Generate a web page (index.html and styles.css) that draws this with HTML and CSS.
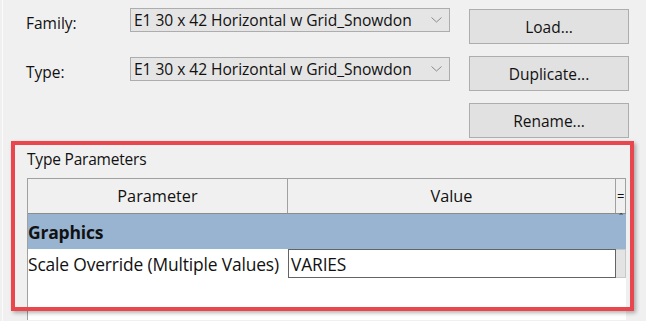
FILE: index.html
```html
<!DOCTYPE html>
<html lang="en">
<head>
    <meta charset="UTF-8">
    <meta name="viewport" content="width=device-width, initial-scale=1.0">
    <title>Type Properties</title>
    <link rel="stylesheet" href="styles.css">
</head>
<body>
    <div id="dialog">
        <div class="top">
            <div class="fields">
                <div class="field">
                    <label>Family:</label>
                    <div class="combo">
                        <span>E1 30 x 42 Horizontal w Grid_Snowdon</span>
                        <svg class="chevron" width="11" height="6" viewBox="0 0 11 6"><path d="M0.5 0.5 L5.5 5 L10.5 0.5" fill="none" stroke="#8a8a8a" stroke-width="1"/></svg>
                    </div>
                </div>
                <div class="field">
                    <label>Type:</label>
                    <div class="combo">
                        <span>E1 30 x 42 Horizontal w Grid_Snowdon</span>
                        <svg class="chevron" width="11" height="6" viewBox="0 0 11 6"><path d="M0.5 0.5 L5.5 5 L10.5 0.5" fill="none" stroke="#8a8a8a" stroke-width="1"/></svg>
                    </div>
                </div>
            </div>
            <div class="buttons">
                <button>Load...</button>
                <button>Duplicate...</button>
                <button>Rename...</button>
            </div>
        </div>

        <div class="params">
            <div class="params-title">Type Parameters</div>
            <div class="grid">
                <div class="row head">
                    <div class="cell c-name">Parameter</div>
                    <div class="cell c-value">Value</div>
                    <div class="cell c-eq">=</div>
                </div>
                <div class="row group">
                    <div class="group-name">Graphics</div>
                    <div class="collapse">&#710;</div>
                </div>
                <div class="row item">
                    <div class="cell c-name">Scale Override (Multiple Values)</div>
                    <div class="cell c-value input">VARIES</div>
                    <div class="cell c-eq side"></div>
                </div>
            </div>
        </div>

        <!-- red highlight drawn over the dialog -->
        <div id="highlight"></div>
    </div>
</body>
</html>
```

FILE: styles.css
```css
body {
    margin: 0;
    background: #f0f0f0;
    font-family: "Open Sans", "Noto Sans", sans-serif;
    color: #111111;
    height: 321px;
    overflow: hidden;
}

#dialog {
    position: relative;
    height: 321px;
    border-left: 1px solid #fbfbfb;
    margin-left: 2px;
}

.top {
    display: flex;
    padding: 8px 0 0 23px;
}

.fields {
    display: flex;
    flex-direction: column;
    gap: 25px;
}

.field {
    display: flex;
    align-items: center;
    height: 24px;
}

.field label {
    width: 104px;
    font-size: 15.5px;
    padding-top: 5px;
}

.combo {
    box-sizing: border-box;
    width: 320px;
    height: 24px;
    background: #e5e5e5;
    border: 1px solid #adadad;
    display: flex;
    align-items: center;
    justify-content: space-between;
    padding: 0 6px 0 3px;
    font-size: 15.6px;
    letter-spacing: -0.05px;
}

.chevron {
    margin-right: 1px;
}

.buttons {
    display: flex;
    flex-direction: column;
    gap: 12px;
    margin: 1px 0 0 19px;
}

button {
    box-sizing: border-box;
    width: 160px;
    height: 35px;
    background: #e1e1e1;
    border: 1px solid #adadad;
    font-family: inherit;
    font-size: 15.5px;
    color: #111111;
    padding: 0;
}

.params {
    padding: 11px 0 0 24px;
}

.params-title {
    font-size: 15.5px;
    height: 21px;
    line-height: 21px;
    letter-spacing: -0.2px;
}

.grid {
    width: 598px;
    margin-top: 8px;
    height: 142px;
    background: #ffffff;
    border-left: 1px solid #a0a0a0;
}

.row {
    display: flex;
}

.cell {
    box-sizing: border-box;
}

.c-name {
    width: 260px;
}

.c-value {
    width: 328px;
}

.c-eq {
    width: 10px;
}

.head {
    height: 36px;
    background: #f0f0f0;
    border-top: 1px solid #a0a0a0;
    border-bottom: 1px solid #8c8c8c;
    box-sizing: border-box;
    font-size: 16.3px;
}

.head .cell {
    display: flex;
    align-items: center;
    justify-content: center;
    border-right: 1px solid #a0a0a0;
}

.head .c-eq {
    font-size: 13px;
    justify-content: flex-start;
    padding-left: 1px;
}

.group {
    height: 35px;
    background: #99b4d1;
    align-items: center;
    justify-content: space-between;
    position: relative;
}

.group-name {
    font-weight: bold;
    font-size: 17.5px;
    padding-left: 0;
    letter-spacing: -0.2px;
}

.collapse {
    position: absolute;
    right: 3px;
    top: -3px;
    font-size: 10px;
    color: #333;
}

.item {
    height: 30px;
    font-size: 17.4px;
    align-items: stretch;
    letter-spacing: -0.15px;
}

.item .c-name {
    display: flex;
    align-items: center;
    padding-left: 0;
    white-space: nowrap;
}

.item .input {
    border: 1px solid #646464;
    background: #ffffff;
    display: flex;
    align-items: center;
    padding-left: 2px;
    height: 29px;
}

.item .side {
    background: #e3e3e3;
    border: 1px solid #c8c8c8;
    border-left: none;
    height: 29px;
}

#highlight {
    position: absolute;
    left: 8px;
    top: 141px;
    width: 623px;
    height: 170px;
    box-sizing: border-box;
    border: 4px solid #e9474d;
    box-shadow: 2px 2px 4px rgba(0, 0, 0, 0.3);
}
```
